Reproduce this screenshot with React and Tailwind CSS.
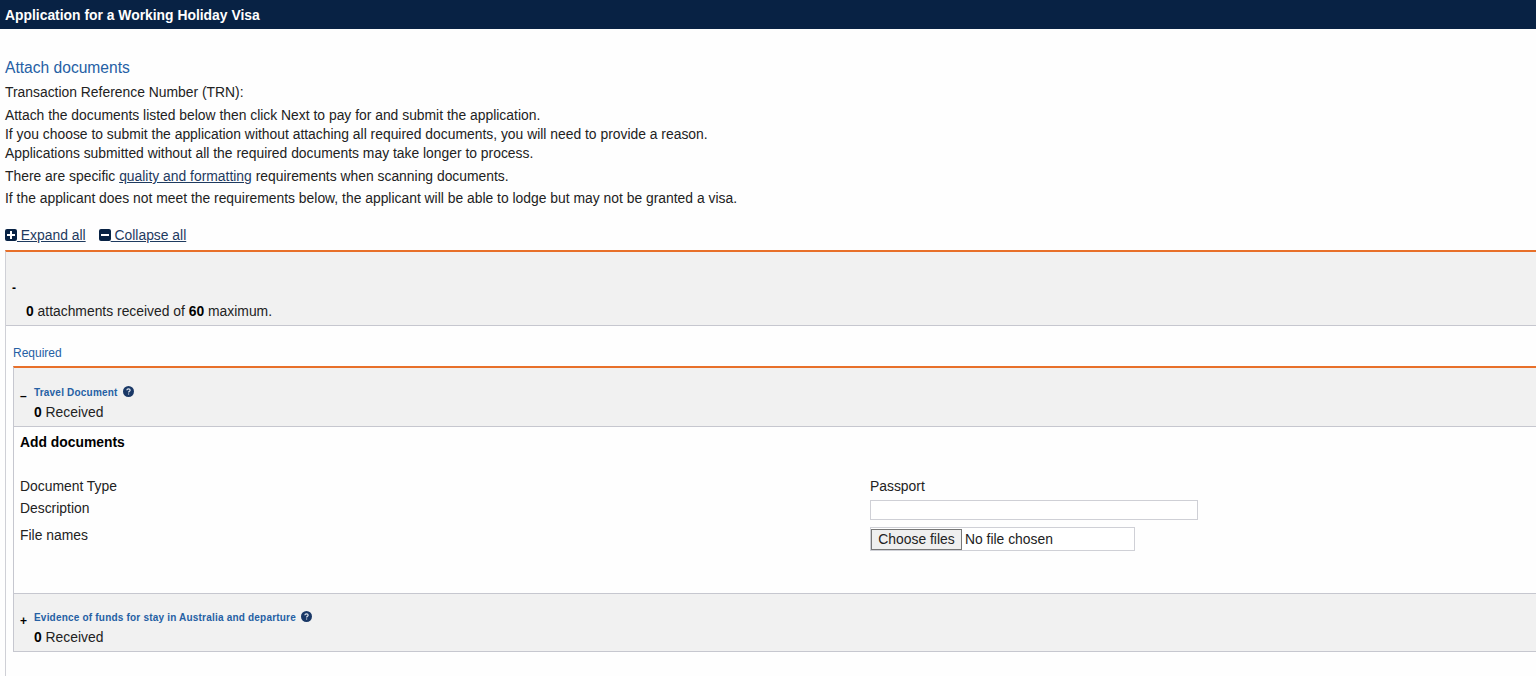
const documents = {
  travel: { toggle: "–", title: "Travel Document", received: 0 },
  funds: {
    toggle: "+",
    title: "Evidence of funds for stay in Australia and departure",
    received: 0,
  },
};

const HelpIcon = () => (
  <svg viewBox="0 0 12 12" className="mb-px w-[11px] h-[11px] shrink-0">
    <circle cx="6" cy="6" r="6" fill="#1a3866" />
    <path
      d="M4.2 4.7C4.3 2.7 7.8 2.7 7.8 4.7C7.8 5.8 6.1 5.8 6.1 7.1M6.1 8.1V9.3"
      fill="none"
      stroke="#dfe6ef"
      strokeWidth="1.3"
    />
  </svg>
);

const SquareIcon = ({ plus }) => (
  <svg viewBox="0 0 12 12" className="mb-px w-3 h-3 shrink-0">
    <rect width="12" height="12" rx="2" fill="#082244" />
    <path
      d={plus ? "M2 6H10M6 2V10" : "M2 6H10"}
      stroke="#fff"
      strokeWidth="2"
    />
  </svg>
);

const DocumentHeader = ({ doc }) => (
  <div className="flex bg-[#f1f1f1] pb-[4px] pl-[6px]">
    <span className="w-[14px] pt-[3px] text-[12px] leading-5 font-bold text-black">
      {doc.toggle}
    </span>
    <div>
      <div className="flex h-[18px] items-center gap-[5px]">
        <a
          href="#"
          className="text-[10px] font-bold tracking-[0.2px] text-[#2560a4]"
        >
          {doc.title}
        </a>
        <HelpIcon />
      </div>
      <p className="mt-[2px] leading-[19px]">
        <b className="text-black">{doc.received}</b> Received
      </p>
    </div>
  </div>
);

const App = () => {
  return (
    <div className="h-[676px] overflow-hidden bg-[#fefefe] font-['Liberation_Sans',Arial,sans-serif] text-[13.88px] leading-[19px] text-[#222]">
      <header className="flex h-[29px] items-center bg-[#082244] pt-px pl-[5px] font-bold text-white">
        <h1>Application for a Working Holiday Visa</h1>
      </header>

      <main className="pl-[5px]">
        <h2 className="pt-[29px] text-[15.6px] leading-5 text-[#2560a4]">
          Attach documents
        </h2>
        <p className="mt-[5px]">Transaction Reference Number (TRN):</p>
        <p className="mt-1">
          Attach the documents listed below then click Next to pay for and
          submit the application.
          <br />
          If you choose to submit the application without attaching all required
          documents, you will need to provide a reason.
          <br />
          Applications submitted without all the required documents may take
          longer to process.
        </p>
        <p className="mt-1">
          There are specific{" "}
          <a href="#" className="text-[#1e3a5f] underline">
            quality and formatting
          </a>{" "}
          requirements when scanning documents.
        </p>
        <p className="mt-[3px]">
          If the applicant does not meet the requirements below, the applicant
          will be able to lodge but may not be granted a visa.
        </p>

        <div className="mt-[18px] flex h-[19px] gap-[13px] text-[#1e3a5f]">
          <a href="#" className="flex items-center whitespace-pre underline">
            <SquareIcon plus />
            <span> Expand all</span>
          </a>
          <a href="#" className="flex items-center whitespace-pre underline">
            <SquareIcon />
            <span> Collapse all</span>
          </a>
        </div>

        {/* All attachments */}
        <section className="mt-[5px] h-[430px] border-t-2 border-l border-t-[#e8702a] border-l-[#cfd0d6]">
          <div className="h-[74px] border-b border-[#c6c7cf] bg-[#f1f1f1] pt-[26px] pl-[6px]">
            <span className="block h-[24px] text-[12px] leading-5 font-bold text-black">
              -
            </span>
            <p className="pl-[14px]">
              <b className="text-black">0</b> attachments received of{" "}
              <b className="text-black">60</b> maximum.
            </p>
          </div>

          <h3 className="pt-[18px] pl-[7px] text-[12px] text-[#2560a4]">
            Required
          </h3>

          <div className="mt-[3px] ml-[7px] border-t-2 border-b border-l border-t-[#e8702a] border-b-[#c6c7cf] border-l-[#c6c7cf]">
            <div className="bg-[#f1f1f1] pt-[15px]">
              <DocumentHeader doc={documents.travel} />
            </div>

            <div className="h-[168px] border-y border-[#c6c7cf] pt-[6px] pl-[6px]">
              <h4 className="font-bold text-black">Add documents</h4>
              <div className="mt-[25px] grid grid-cols-[850px_auto]">
                <span className="h-[22px]">Document Type</span>
                <span>Passport</span>
                <label htmlFor="description" className="h-[27px]">
                  Description
                </label>
                <input
                  id="description"
                  className="mt-px h-[20px] w-[328px] border border-[#cfd0d6] bg-white"
                />
                <span>File names</span>
                <div className="mt-px flex h-6 w-[265px] items-center border border-[#cfd0d6] bg-white">
                  <button className="h-[21px] w-[91px] border border-[#777] bg-[#efefef] text-[#222]">
                    Choose files
                  </button>
                  <span className="pl-[3px]">No file chosen</span>
                </div>
              </div>
            </div>

            <div className="bg-[#f1f1f1] pt-[14px]">
              <DocumentHeader doc={documents.funds} />
            </div>
          </div>
        </section>
      </main>
    </div>
  );
};

export default App;
